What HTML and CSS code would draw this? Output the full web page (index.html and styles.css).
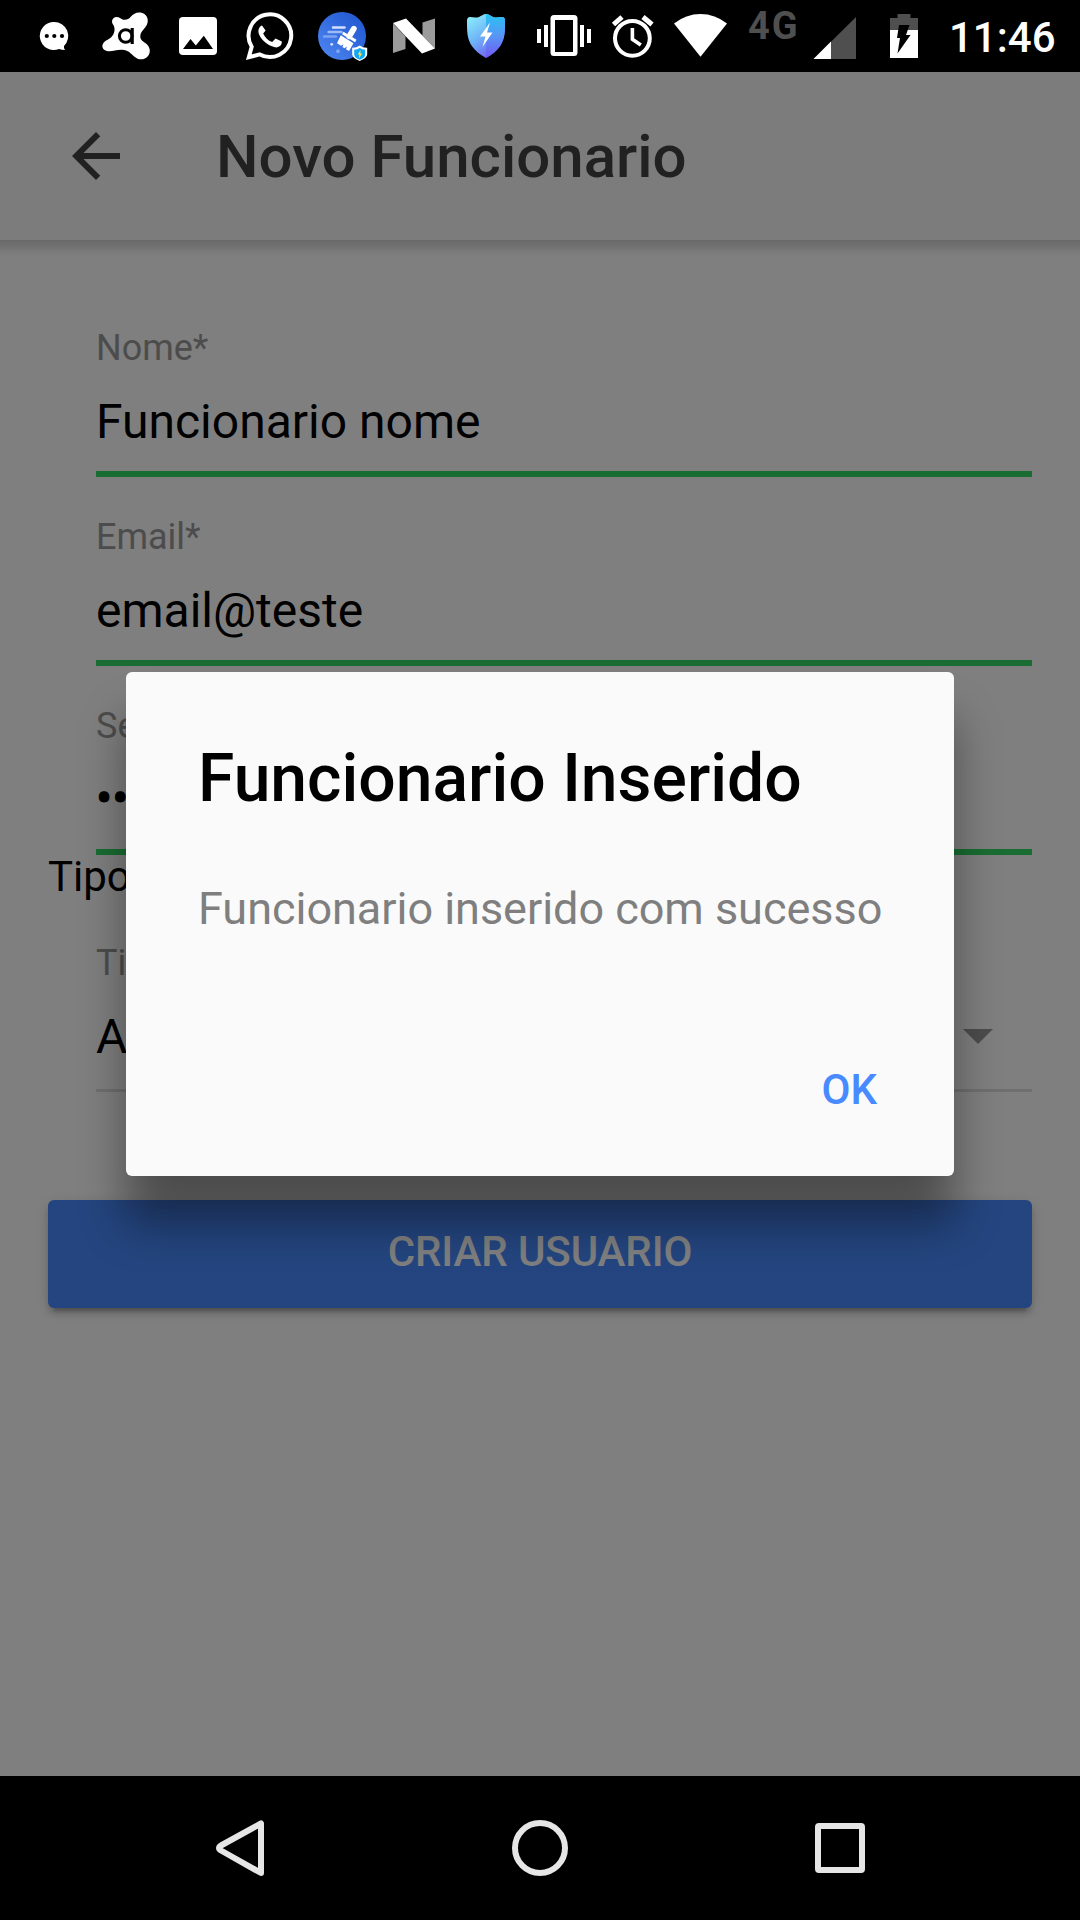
FILE: index.html
```html
<!DOCTYPE html>
<html lang="pt-BR">
<head>
<meta charset="utf-8">
<title>Novo Funcionario</title>
<link rel="stylesheet" href="styles.css">
</head>
<body>
<div class="phone">
  <header class="status">
    <svg class="ic-72" viewBox="18 0 72 72"><path fill="#fff" d="M54 22a14 14 0 1 0 5 27q3 1 6 1-1.500-2-1-4A14 14 0 0 0 54 22z"/><circle cx="46.800" cy="36" r="2.100"/><circle cx="54.300" cy="36" r="2.100"/><circle cx="62" cy="36" r="2.100"/></svg>
    <svg class="ic-72" viewBox="90 0 72 72"><path fill="#fff" d="M112 21.500c0-4 4.500-5.800 8-3.500 4 3 8 2.200 11-1.500 2-2.700 5.500-4.500 9.500-4 6 .8 8.800 6.500 6.500 12-1.500 3.500-6.500 7-6.700 11.500-.2 5 3.700 5.500 7 8.700 3.500 3.800 3.500 9.500-.8 12.800-3.700 2.800-8.500 2.300-12-.7-4-3.500-6-6.800-12.500-7.100-5-.3-9 1.800-14 1.500-5.500-.4-7.500-6-3.500-9.500 2.600-2.200 6-2.700 8.500-6.700 2.600-4.500 1.500-8.500 0-10.500-.7-1-1-2-1-3z"/><circle cx="125.700" cy="36" r="6.300" fill="none" stroke="#000" stroke-width="3"/><path d="M132.200 28v16" stroke="#000" stroke-width="3.200"/></svg>
    <svg class="ic-72" viewBox="162 0 72 72"><rect x="179" y="17" width="38" height="38" rx="4" fill="#fff"/><path d="M183 49l7.500-10 5.300 6.500 8-9.700L213 49z"/></svg>
    <svg class="ic-72" viewBox="234 0 72 72"><path fill="none" stroke="#fff" stroke-width="4" d="M248.800 57.200l2.900-10.500A21.300 21.300 0 1 1 259.800 54.400z"/><path fill="#fff" d="M262 25.500c-2 .6-4 3-3.500 7 1.200 5.500 8 13 16.500 14.800 4 .6 7.200-2 6.800-5.700l-6.300-3.200-3.300 3.600c-4-1.500-7.300-4.600-9-8.600l2.400-3z"/></svg>
    <svg class="ic-72" viewBox="306 0 72 72"><defs><linearGradient id="sky" x1="0" y1="1" x2="1" y2="0"><stop offset="0" stop-color="#5089f3"/><stop offset=".6" stop-color="#3068dc"/><stop offset="1" stop-color="#1f55cc"/></linearGradient></defs><circle cx="342" cy="36" r="24" fill="url(#sky)"/><g stroke-linecap="round" stroke-width="2.400"><path d="M333 27.500h11.500" stroke="#d3e0fb"/><path d="M328.500 32h13" stroke="#9cbaf6"/><path d="M324 36.500h12" stroke="#7da4f4"/></g><path d="M353.800 28.800l-4.500 7.500" stroke="#fff" stroke-width="5.800" stroke-linecap="round"/><path fill="#fff" d="M343.500 31.800l13 8-1.500 2.400-13-8zM340.800 35.300l12.700 7.900-4.500 7.800-3-1.800 1-2.700-2.500 1.700-2-1.300.9-2.600-2.300 1.500-4.100-2.600z"/><circle cx="331.700" cy="44.300" r="1.400" fill="#d3e0fb"/><circle cx="338" cy="51.300" r="2" fill="#7da4f4"/><path fill="#fff" d="M359.700 45.500q3.300 2.500 7.500 2.300v6c0 3.500-3 5.500-7.500 7.200-4.500-1.700-7.500-3.700-7.500-7.200v-6q4.200.2 7.500-2.300z"/><path fill="#12a8f5" d="M359.700 48q2.700 1.800 5.500 1.700v4.700c0 2.500-2.500 4.100-5.500 5.300-3-1.200-5.500-2.800-5.500-5.300v-4.700q2.800.1 5.500-1.700z"/><path fill="#ffe640" d="M360.700 50l-3 4.400h1.700l-.5 4 3.200-4.900h-1.900z"/></svg>
    <svg class="ic-72" viewBox="378 0 72 72"><path fill="#9b9b9b" d="M393 23.500l12.500 13V49L393 53zM422.500 22.500l12.500-4V48.500l-12.500-13z"/><path fill="#fff" d="M393 23l13-4.500 29 30-13 5z"/></svg>
    <svg class="ic-72" viewBox="450 0 72 72"><defs><linearGradient id="shield" x1=".1" y1="0" x2=".7" y2="1"><stop offset="0" stop-color="#8cf0fa"/><stop offset=".5" stop-color="#6db2f8"/><stop offset="1" stop-color="#7454f3"/></linearGradient><linearGradient id="half" x1="0" y1="0" x2="0" y2="1"><stop offset="0" stop-color="#27c3f3"/><stop offset=".5" stop-color="#5796f6"/><stop offset="1" stop-color="#7358f2"/></linearGradient></defs><path fill="url(#shield)" d="M486 14c-3 0-4.500 2-7 3-3 1-6 .3-9 0-2 0-3 1.500-3 3.500 0 10 0 18 4.500 25 3.500 5.500 9 9.500 14.500 12.500 5.500-3 11-7 14.500-12.500 4.500-7 4.500-15 4.500-25 0-2-1-3.500-3-3.500-3 .3-6 1-9 0-2.500-1-4-3-7-3z"/><path fill="url(#half)" d="M486 14c3 0 4.500 2 7 3 3 1 6 .3 9 0 2 0 3 1.500 3 3.500 0 10 0 18-4.500 25-3.500 5.500-9 9.500-14.500 12.500z"/><path fill="#fff" d="M490 22.500l-10 14h5.500L482.500 47l10-14.500H487z"/></svg>
    <svg class="ic-78" viewBox="522 0 78 72"><path fill="#fff" fill-rule="evenodd" d="M554 15h20q3.500 0 3.500 3.500v34q0 3.500-3.500 3.500h-20q-3.500 0-3.500-3.500v-34q0-3.500 3.500-3.500zm1 5v32h18V20z"/><path fill="#fff" d="M537 29h4v14h-4zM544 25h4v22h-4zM580 25h4v22h-4zM587 29h4v14h-4z"/></svg>
    <svg class="ic-66" viewBox="600 0 66 72"><g fill="none" stroke="#fff"><circle cx="632.400" cy="38.300" r="17.400" stroke-width="4"/><path stroke-width="3.600" d="M632.400 28v11.300l8.400 5.800"/><path stroke-width="5" d="M613.500 24.500l8.500-7.500M643 17l9 7.500"/></g></svg>
    <svg class="ic-72" viewBox="666 0 72 72"><path fill="#fff" d="M700.500 56.700L674 23.500Q686 14 700.500 14T727 23.500z"/></svg>
    <span class="network">4G</span>
    <svg class="ic-54" viewBox="810 0 54 72"><path fill="#4f4f4f" d="M856 17v42h-42.500z"/><path fill="#fff" d="M831 41.500V59h-17.500z"/></svg>
    <svg class="ic-78" viewBox="864 0 78 72"><path fill="#4f4f4f" d="M897.500 14h13v4h7.500v12h-28V18h7.500z"/><path fill="#fff" d="M890 30h28v28h-28z"/><path d="M899 25h10.500l-3.500 10h4.500l-13 18.500 2.500-15.500h-3z"/></svg>
    <span class="clock">11:46</span>
  </header>

  <main class="app">
    <div class="toolbar">
      <svg class="back" viewBox="0 0 24 24"><path fill="#424242" d="M20 11H7.830l5.590-5.590L12 4l-8 8 8 8 1.410-1.410L7.830 13H20z"/></svg>
      <h1 class="heading">Novo Funcionario</h1>
    </div>
    <div class="content">
      <div class="item valid"><label class="label">Nome*</label><div class="value">Funcionario nome</div></div>
      <div class="item valid"><label class="label">Email*</label><div class="value">email@teste</div></div>
      <div class="item valid"><label class="label">Senha*</label><div class="value dots">••••••</div></div>
      <div class="section">Tipo</div>
      <div class="item"><label class="label">Tipo</label><div class="value choice"><span>Admin</span><svg class="caret" viewBox="0 0 30 15"><path fill="#999" d="M0 0h30L15 15z"/></svg></div></div>
      <button class="create">CRIAR USUARIO</button>
    </div>
    <div class="backdrop">
      <section class="dialog">
        <h2 class="dialog-title">Funcionario Inserido</h2>
        <p class="message">Funcionario inserido com sucesso</p>
        <div class="actions"><span class="ok">OK</span></div>
      </section>
    </div>
  </main>

  <nav class="nav">
    <svg class="nav-icons" viewBox="0 1776 1080 144"><g fill="none" stroke="#e6e6e6" stroke-width="6" stroke-linejoin="round"><path d="M261 1823.500v49.500L221 1850.500Q217 1848 221 1845.500z"/><circle cx="540" cy="1848" r="25"/><rect x="818" y="1826" width="44" height="44" rx="1"/></g></svg>
  </nav>
</div>
</body>
</html>
```
FILE: styles.css
```css
* { box-sizing: border-box; margin: 0; padding: 0; }
body { font-family: Roboto, "Liberation Sans", sans-serif; background: #000; overflow: hidden; }
.phone { width: 1080px; height: 1920px; display: flex; flex-direction: column; }

/* system bars */
.status { height: 72px; padding-left: 18px; display: flex; background: #000; color: #fff; flex: none; }
.status svg { height: 72px; flex: none; }
.ic-72 { width: 72px; }
.ic-78 { width: 78px; }
.ic-66 { width: 66px; }
.ic-54 { width: 54px; }
.network { width: 72px; padding-left: 10px; font-size: 38px; line-height: 52px; font-weight: 700; letter-spacing: 2px; color: #4f4f4f; }
.clock { padding-left: 7px; font-size: 42px; line-height: 75px; font-weight: 500; }
.nav { height: 144px; background: #000; flex: none; }
.nav-icons { display: block; width: 1080px; height: 144px; }

/* page behind the dialog */
.app { position: relative; flex: 1; background: #fff; }
.toolbar { height: 168px; padding-left: 60px; display: flex; align-items: center; background: #f8f8f8; }
.back { width: 72px; height: 72px; margin-right: 84px; }
.heading { padding-top: 2px; font-size: 60px; font-weight: 500; line-height: 70px; color: #424242; }
.content { padding: 48px; background: linear-gradient(#d3d3d3, #e4e4e4 7px, #f6f6f6 12px, #fff 17px) no-repeat 0 0 / 100% 17px; }
.item { height: 189px; margin-left: 48px; padding-top: 39px; border-bottom: 3px solid #dedede; }
.item.valid { border-bottom: 6px solid #32db64; }
.label { display: block; font-size: 36px; line-height: 42px; color: #999; }
.value { margin-top: 25px; font-size: 48px; line-height: 56px; color: #000; }
.dots { margin-top: 24px; -webkit-text-stroke: 1px #000; }
.choice { display: flex; justify-content: space-between; align-items: center; padding-right: 39px; }
.caret { width: 30px; height: 15px; margin-bottom: 2px; }
.section { height: 48px; font-size: 42px; line-height: 43px; }
.create { display: block; width: 100%; height: 108px; margin-top: 108px; padding-bottom: 5px; border: 0; border-radius: 6px; background: #488aff; color: #fff; font: 500 42px Roboto, sans-serif; letter-spacing: -.1px; box-shadow: 0 6px 6px rgba(0,0,0,.14), 0 9px 3px -6px rgba(0,0,0,.2), 0 3px 15px rgba(0,0,0,.12); }

/* alert */
.backdrop { position: absolute; inset: 0; padding: 600px 126px 0; background: rgba(0,0,0,.5); }
.dialog { height: 504px; padding: 68px 72px 0; border-radius: 6px; background: #fafafa; box-shadow: 0 47px 46px rgba(0,0,0,.4); }
.dialog-title { font-size: 66px; line-height: 78px; font-weight: 500; color: #000; }
.message { margin-top: 64px; font-size: 45px; line-height: 54px; letter-spacing: -.03px; color: #7f7f7f; white-space: nowrap; }
.actions { display: flex; justify-content: flex-end; margin-top: 133px; padding-right: 5px; }
.ok { font-size: 42px; line-height: 42px; font-weight: 500; color: #488aff; }
```
